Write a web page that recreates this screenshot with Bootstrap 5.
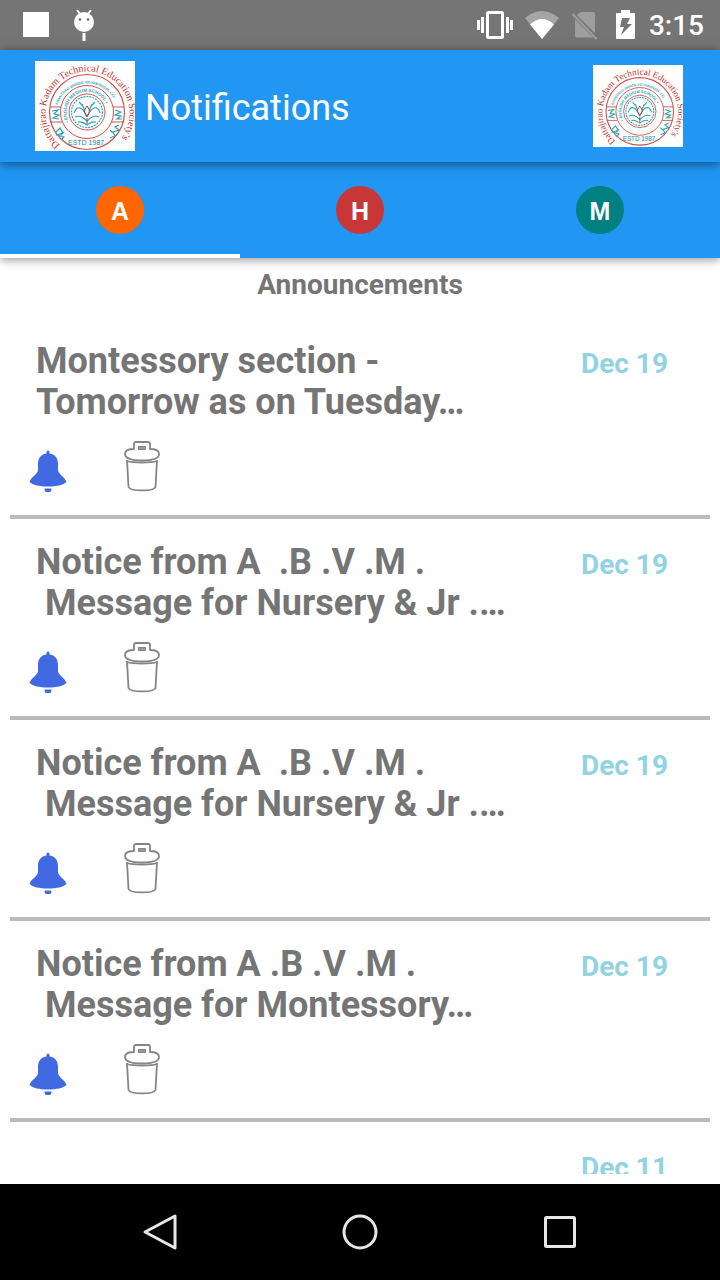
<!DOCTYPE html>
<html lang="en">
<head>
<meta charset="utf-8">
<meta name="viewport" content="width=device-width, initial-scale=1">
<title>Notifications</title>
<link href="https://cdn.jsdelivr.net/npm/bootstrap@5.3.0/dist/css/bootstrap.min.css" rel="stylesheet">
<style>
body { font-family: Roboto, "Liberation Sans", sans-serif; color: #757575; }
.status-strip { background: #757575; height: 50px; padding: 0 16px 0 22px; }
.clock-text { font-size: 28px; line-height: 32px; font-weight: 500; padding-top: 2px; }
.app-header { background: #2196f3; height: 112px; padding: 0 37px 0 35px; z-index: 2; box-shadow: 0 2px 10px rgba(0,0,0,.5); }
.app-title { font-size: 36px; line-height: 42px; padding: 4px 0 0 10px; }
.crest { background: #fefefe; }
.tab-strip { background: #2196f3; height: 96px; z-index: 1; box-shadow: 0 2px 9px rgba(0,0,0,.4); }
.tab-strip button { border-bottom: 4px solid transparent; padding: 4px 0 0; }
.tab-strip button.active { border-bottom-color: #fff; }
.disc { width: 48px; height: 48px; font: bold 25px/50px "Liberation Sans", sans-serif; }
.disc-a { background: #ff6600; }
.disc-h { background: #c83737; }
.disc-m { background: #008080; }
.section-title { font-size: 28px; line-height: 32px; padding: 11px 0 17px; }
.notice-list { margin: 0 10px 10px; scrollbar-width: none; }
.notice { padding: 23px 42px 23px 19px; border-bottom: 4px solid #bababa; }
.notice-title { font-size: 36px; line-height: 41px; padding-left: 7px; white-space: pre-wrap; }
.notice time { font-size: 28px; line-height: 46px; color: #92d3e1; }
.notice-actions { margin-top: 17px; gap: 56px; }
.nav-strip { height: 96px; }
.nav-keys { padding: 0 60px; }
svg { display: block; }
</style>
</head>
<body class="bg-white">
<svg width="0" height="0" class="position-absolute" aria-hidden="true">
  <symbol id="bell" viewBox="0 0 38 52">
    <path fill="#4169e1" d="M17.500 12a1.500 1.500 0 0 1 3 0v1.500C27 14.500 29 19 29 24v6c0 4 7 7 8.500 12C34 45 28 46.500 19 46.500S4 45 .5 42C2 37 9 34 9 30v-6c0-5 2-9.500 8.500-10.500z"/>
    <path fill="#4169e1" d="M15.500 48.500h7c0 3-1.500 4.500-3.500 4.500s-3.500-1.500-3.500-4.500z"/>
  </symbol>
  <symbol id="bin" viewBox="0 0 38 52">
    <g fill="#fff" stroke="#858585" stroke-width="1.800" stroke-linejoin="round">
      <path d="M4 20l1.500 27c2 4.500 25 4.500 27 0L34 20"/>
      <path d="M11 9V4q0-2 2-2h12q2 0 2 2v5c6 0 9 2 9 5 0 4-6 6.500-17 6.500S2 18 2 14c0-3 3-5 9-5z"/>
      <path d="M4 21c6 2 24 2 30 0" fill="none"/>
      <path fill="#999" stroke-width="1" d="M15.500 6.500h7v3h-7z"/>
    </g>
  </symbol>
  <symbol id="crest" viewBox="0 0 100 90">
    <g fill="none" stroke="#d0544c">
      <circle cx="52" cy="51" r="37.500" stroke-width="1.200"/>
      <circle cx="52" cy="51" r="26.500" stroke-width="1"/>
      <circle cx="52" cy="51" r="18" stroke-width="1"/>
      <path d="M15 46h11M15 61h12M78 46h11M77 61h12" stroke-width="1"/>
    </g>
    <text font-family="Liberation Serif, serif" font-size="10" fill="#c8352e"><textPath href="#arcName">Dattajirao Kadam Technical Education Society's</textPath></text>
    <g font-family="Liberation Sans, sans-serif" font-weight="bold" fill="#2aa4b4">
      <text font-size="3.600"><textPath href="#arcMid">ANANTRAO SHINDE VIDYAMANDIR, CCI</textPath></text>
      <text font-size="4.500"><textPath href="#arcIn">• ENGLISH MEDIUM SCHOOL •</textPath></text>
      <text x="33" y="84" font-size="7" font-weight="normal" fill="#158b9b">ESTD 1987</text>
    </g>
    <g fill="none" stroke="#2aa4b4" stroke-width="1.200">
      <circle cx="52" cy="51" r="15.500" stroke-dasharray="2 1"/>
      <path d="M39 52c2-4 3-6 6-5 4 1 4 5 7 8 3-3 3-7 7-8 3-1 5 1 6 5M40 56c5-2 8 0 12 4 4-4 7-6 12-4M43 61c4-1 6 1 9 3 3-2 5-4 9-3M47 43l3 7M57 43l-3 7M44 41l3 3M60 41l-3 3"/>
      <path d="M17 50l6-1-4 4 5 1-6 3 6 1M80 49l6 2-6 3 6 1-4 3 5 0M20 72l5-5 3 5-6 2 7 2-3 3M75 77l5-2-2-4 6-2-4-3 4-2M29 71l-3 3M75 69l3 3"/>
    </g>
    <g stroke="#c8352e" fill="none"><path d="M49 50l3-5 3 5-3 6z"/><path d="M52 57v6"/></g>
  </symbol>
  <defs>
    <path id="arcName" d="M25 84A42 42 0 1 1 80 84"/>
    <path id="arcMid" d="M22.500 44A31 31 0 0 1 81.500 44"/>
    <path id="arcIn" d="M34 61A20.500 20.500 0 1 1 70 61"/>
  </defs>
</svg>

<div class="d-flex flex-column vh-100 overflow-hidden">
  <div class="status-strip d-flex align-items-center justify-content-between text-white flex-shrink-0">
    <svg width="76" height="36" viewBox="22 7 76 36" aria-hidden="true">
      <path fill="#fff" d="M23 12h26v25H23z"/>
      <circle cx="84" cy="22" r="10" fill="#fff"/>
      <path d="M80 14l-3-4M88 14l3-4" stroke="#fff" stroke-width="2"/>
      <path d="M84 33v8" stroke="#fff" stroke-width="3"/>
      <circle cx="80" cy="19.500" r="1.300" fill="#666"/><circle cx="88" cy="19.500" r="1.300" fill="#666"/>
    </svg>
    <div class="d-flex align-items-center">
      <svg width="172" height="36" viewBox="477 7 172 36" aria-hidden="true">
        <g fill="none" stroke="#fff" stroke-width="3"><rect x="487.500" y="12.500" width="15" height="25" rx="1"/><path d="M482.500 17v16M507.500 17v16M478.500 20v10M511.500 20v10"/></g>
        <path fill="#a5a5a5" d="M525 18q17-14 34 0l-17 21z"/>
        <path fill="#fff" d="M530 24.500q12-11 24 0l-12 14.500z"/>
        <path fill="#9e9e9e" d="M581 12h12q2 0 2 2v19L576.500 15z M575 19l18 18.500h-16q-2 0-2-2z"/>
        <path stroke="#9e9e9e" stroke-width="2" d="M572.500 14l24 25"/>
        <path fill="#fff" d="M616 14q0-1 1-1h4v-3h9v3h4q1 0 1 1v24q0 1-1 1h-17q-1 0-1-1z"/>
        <path fill="#757575" d="M622 18h8l-3 6h5l-11 11 3-8h-4z"/>
      </svg>
      <span class="clock-text">3:15</span>
    </div>
  </div>

  <header class="app-header position-relative d-flex align-items-center flex-shrink-0">
    <svg class="crest flex-shrink-0" width="100" height="90" role="img" aria-label="School crest"><use href="#crest"/></svg>
    <h1 class="app-title text-white fw-normal mb-0 flex-grow-1">Notifications</h1>
    <svg class="crest flex-shrink-0" width="90" height="82" role="img" aria-label="School crest"><use href="#crest"/></svg>
  </header>

  <nav class="tab-strip position-relative d-flex flex-shrink-0" aria-label="Categories">
    <button type="button" class="active btn rounded-0 flex-fill border-top-0 border-start-0 border-end-0 d-flex justify-content-center align-items-center" aria-label="Announcements"><span class="disc disc-a rounded-circle text-white">A</span></button>
    <button type="button" class="btn rounded-0 flex-fill border-top-0 border-start-0 border-end-0 d-flex justify-content-center align-items-center" aria-label="Homework"><span class="disc disc-h rounded-circle text-white">H</span></button>
    <button type="button" class="btn rounded-0 flex-fill border-top-0 border-start-0 border-end-0 d-flex justify-content-center align-items-center" aria-label="Messages"><span class="disc disc-m rounded-circle text-white">M</span></button>
  </nav>

  <h2 class="section-title text-center fw-bold mb-0 flex-shrink-0">Announcements</h2>

  <main class="notice-list flex-fill overflow-auto">
    <article class="notice">
      <div class="d-flex justify-content-between align-items-start">
        <h3 class="notice-title fw-bold mb-0">Montessory section -
Tomorrow as on Tuesday…</h3>
        <time class="fw-bold text-nowrap">Dec 19</time>
      </div>
      <div class="notice-actions d-flex">
        <button type="button" class="btn p-0 border-0" aria-label="Remind"><svg width="38" height="52" class="overflow-visible"><use href="#bell"/></svg></button>
        <button type="button" class="btn p-0 border-0" aria-label="Delete"><svg width="38" height="52"><use href="#bin"/></svg></button>
      </div>
    </article>
    <article class="notice">
      <div class="d-flex justify-content-between align-items-start">
        <h3 class="notice-title fw-bold mb-0">Notice from A  .B .V .M .
 Message for Nursery &amp; Jr .…</h3>
        <time class="fw-bold text-nowrap">Dec 19</time>
      </div>
      <div class="notice-actions d-flex">
        <button type="button" class="btn p-0 border-0" aria-label="Remind"><svg width="38" height="52"><use href="#bell"/></svg></button>
        <button type="button" class="btn p-0 border-0" aria-label="Delete"><svg width="38" height="52"><use href="#bin"/></svg></button>
      </div>
    </article>
    <article class="notice">
      <div class="d-flex justify-content-between align-items-start">
        <h3 class="notice-title fw-bold mb-0">Notice from A  .B .V .M .
 Message for Nursery &amp; Jr .…</h3>
        <time class="fw-bold text-nowrap">Dec 19</time>
      </div>
      <div class="notice-actions d-flex">
        <button type="button" class="btn p-0 border-0" aria-label="Remind"><svg width="38" height="52"><use href="#bell"/></svg></button>
        <button type="button" class="btn p-0 border-0" aria-label="Delete"><svg width="38" height="52"><use href="#bin"/></svg></button>
      </div>
    </article>
    <article class="notice">
      <div class="d-flex justify-content-between align-items-start">
        <h3 class="notice-title fw-bold mb-0">Notice from A .B .V .M .
 Message for Montessory…</h3>
        <time class="fw-bold text-nowrap">Dec 19</time>
      </div>
      <div class="notice-actions d-flex">
        <button type="button" class="btn p-0 border-0" aria-label="Remind"><svg width="38" height="52"><use href="#bell"/></svg></button>
        <button type="button" class="btn p-0 border-0" aria-label="Delete"><svg width="38" height="52"><use href="#bin"/></svg></button>
      </div>
    </article>
    <article class="notice">
      <div class="d-flex justify-content-end"><time class="fw-bold text-nowrap">Dec 11</time></div>
    </article>
  </main>

  <footer class="nav-strip bg-black flex-shrink-0">
    <div class="nav-keys d-flex h-100">
      <button type="button" class="btn flex-fill border-0 d-flex justify-content-center align-items-center" aria-label="Back"><svg width="40" height="40" viewBox="0 0 40 40"><path d="M35 4v32L5 20z" fill="none" stroke="#e6e6e6" stroke-width="3" stroke-linejoin="round"/></svg></button>
      <button type="button" class="btn flex-fill border-0 d-flex justify-content-center align-items-center" aria-label="Home"><svg width="40" height="40" viewBox="0 0 40 40"><circle cx="20" cy="20" r="16" fill="none" stroke="#e6e6e6" stroke-width="3"/></svg></button>
      <button type="button" class="btn flex-fill border-0 d-flex justify-content-center align-items-center" aria-label="Recent apps"><svg width="40" height="40" viewBox="0 0 40 40"><rect x="5.500" y="5.500" width="29" height="29" rx="1" fill="none" stroke="#e6e6e6" stroke-width="3"/></svg></button>
    </div>
  </footer>
</div>
<script src="https://cdn.jsdelivr.net/npm/bootstrap@5.3.0/dist/js/bootstrap.bundle.min.js"></script>
</body>
</html>
